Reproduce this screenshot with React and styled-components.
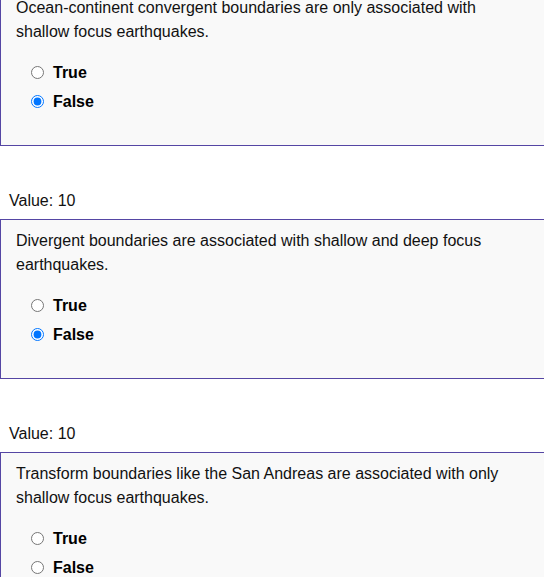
import React from 'react';
import styled, { createGlobalStyle } from 'styled-components';

const GlobalStyle = createGlobalStyle`
  html, body {
    margin: 0;
    padding: 0;
    background: #fff;
    overflow: hidden;
  }
  body {
    font-family: "Liberation Sans", Arial, sans-serif;
    font-size: 16px;
    color: #000;
  }
`;

const Page = styled.div`
  margin-top: -14px;
`;

const QuestionBlock = styled.div`
  .value {
    padding: 45px 0 9px 9px;
    line-height: 19px;
    color: #111;
  }
`;

const QuestionBox = styled.div`
  background: #f9f9f9;
  border: 1px solid #5546a4;
  border-right: none;
  padding: 9px 15px 29px;
  .prompt {
    margin: 0;
    line-height: 24px;
    color: #111;
  }
  .options {
    margin-top: 14px;
    display: flex;
    flex-direction: column;
  }
`;

const Option = styled.label`
  display: flex;
  align-items: center;
  height: 29px;
  padding-left: 15px;
  gap: 9px;
  font-weight: 700;
  color: #000;
  input {
    margin: 0;
    width: 13px;
    height: 13px;
    accent-color: #0075ff;
  }
`;

const questions = [
  {
    id: 'q1',
    text: 'Ocean-continent convergent boundaries are only associated with shallow focus earthquakes.',
    answer: 'False',
  },
  {
    id: 'q2',
    value: 10,
    text: 'Divergent boundaries are associated with shallow and deep focus earthquakes.',
    answer: 'False',
  },
  {
    id: 'q3',
    value: 10,
    text: 'Transform boundaries like the San Andreas are associated with only shallow focus earthquakes.',
    answer: null,
  },
];

const App = () => {
  return (
    <>
      <GlobalStyle />
      <Page>
        {questions.map((q) => (
          <QuestionBlock key={q.id}>
            {q.value && <div className='value'>Value: {q.value}</div>}
            <QuestionBox>
              <p className='prompt'>{q.text}</p>
              <div className='options'>
                {['True', 'False'].map((opt) => (
                  <Option key={opt}>
                    <input
                      type='radio'
                      name={q.id}
                      defaultChecked={q.answer === opt}
                    />
                    {opt}
                  </Option>
                ))}
              </div>
            </QuestionBox>
          </QuestionBlock>
        ))}
      </Page>
    </>
  );
};

export default App;
